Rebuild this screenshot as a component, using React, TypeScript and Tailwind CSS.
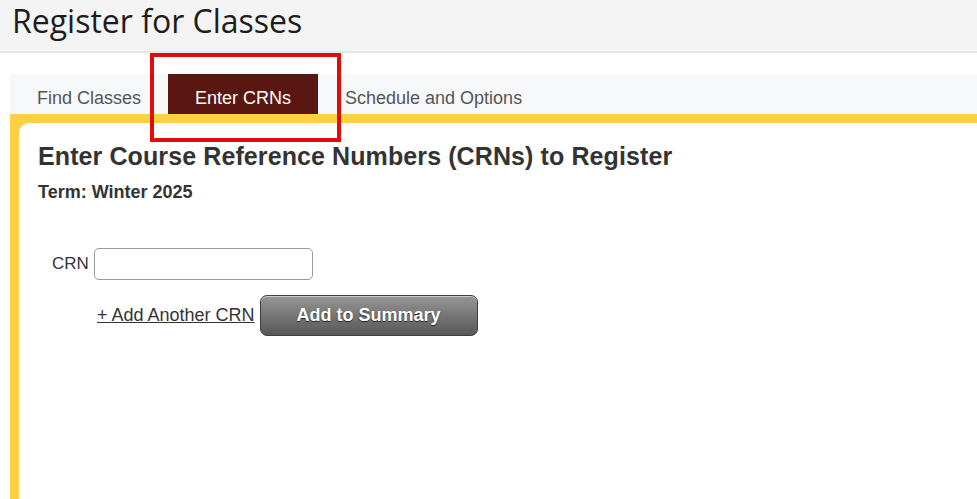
export default function App() {
  return (
    <div className="relative w-[977px] h-[499px] overflow-hidden bg-white" style={{ fontFamily: '"Liberation Sans", Arial, sans-serif' }}>
      <div className="h-[53px] bg-[#f4f4f4] border-b-2 border-[#e6e6e6] flex items-center pl-[12px]">
        <h1 className="text-[32px] text-[#1d1d1d] leading-none pb-[10px]" style={{ fontFamily: '"Open Sans", sans-serif' }}>Register for Classes</h1>
      </div>
      <div className="ml-[10px] mt-[21px]">
        <div className="h-[40px] bg-[#f7f8fa] flex items-stretch text-[18px]">
          <div className="w-[158px] flex items-center pl-[27px] text-[#555] pt-[8px]">Find Classes</div>
          <div className="w-[150px] bg-[#5a1610] text-white flex items-center justify-center pt-[8px]">Enter CRNs</div>
          <div className="flex items-center pl-[27px] text-[#555] pt-[8px]">Schedule and Options</div>
        </div>
        <div className="bg-[#ffd043] pt-[9px] pl-[9px] h-[400px]">
          <div className="bg-white rounded-tl-[10px] h-full pl-[19px] pt-[19px] text-[#333]">
            <h2 className="text-[25px] font-bold leading-[29px] tracking-[0.1px]">Enter Course Reference Numbers (CRNs) to Register</h2>
            <div className="text-[18px] font-bold mt-[11px] leading-[21px]">Term: Winter 2025</div>
            <div className="flex items-center mt-[45px] pl-[14px]">
              <span className="text-[17px] mr-[5px]">CRN</span>
              <input className="w-[219px] h-[32px] border border-[#9a9a9a] rounded-[5px] bg-white" />
            </div>
            <div className="flex items-center mt-[15px] pl-[59px]">
              <a href="#" className="text-[18px] underline text-[#333] mr-[5px] mt-[0px]">+ Add Another CRN</a>
              <button className="w-[218px] h-[41px] rounded-[7px] border border-[#3f3f3f] text-white font-bold text-[18px] bg-gradient-to-b from-[#969696] to-[#585858] shadow-[inset_0_1px_0_rgba(255,255,255,0.5)]" style={{ textShadow: '0 1px 1px #222' }}>Add to Summary</button>
            </div>
          </div>
        </div>
      </div>
      <div className="absolute left-[150px] top-[53px] w-[191px] h-[89px] border-[4px] border-[#e00b0b]" />
    </div>
  );
}
